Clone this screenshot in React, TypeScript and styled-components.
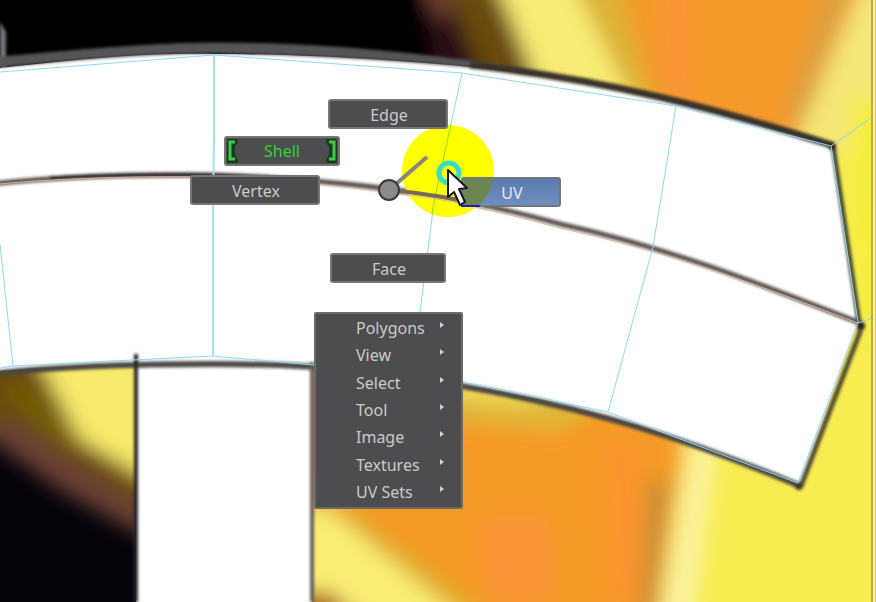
import React from 'react';
import styled, { createGlobalStyle, css } from 'styled-components';

const GlobalStyle = createGlobalStyle`
  *, *::before, *::after { box-sizing: border-box; }
  body { margin: 0; background: #fff; }
`;

const Stage = styled.main`
  position: relative;
  min-height: 100vh;
  overflow: hidden;
  font-family: 'Noto Sans', sans-serif;
  font-size: 16px;
  line-height: 20px;
`;

const Canvas = styled.svg`
  display: block;
  width: 100%;
  height: 100vh;
`;

const Overlay = styled.svg`
  position: absolute;
  left: 376px;
  top: 120px;
  pointer-events: none;
`;

const MarkingMenu = styled.nav`
  position: absolute;
  left: 0;
  top: 0;
`;

type Tone = 'plain' | 'checked' | 'hot';

const MarkingItem = styled.button<{ $x: number; $y: number; $w: number; $tone: Tone }>`
  position: absolute;
  left: ${(p) => p.$x}px;
  top: ${(p) => p.$y}px;
  width: ${(p) => p.$w}px;
  height: 30px;
  padding: 2px 0 0 2px;
  display: flex;
  align-items: center;
  justify-content: center;
  border: 2px solid #777677;
  border-radius: 3px;
  background: #4d4c4e;
  color: #cbcbcb;
  font: inherit;
  ${(p) =>
    p.$tone === 'checked' &&
    css`
      justify-content: space-between;
      padding: 0;
      color: #2fd62f;
    `}
  ${(p) =>
    p.$tone === 'hot' &&
    css`
      border-color: #727680;
      background: radial-gradient(circle 47px at -15px -8px, #6c8653 45px, transparent 47px),
        linear-gradient(#597bae, #6f8fbd);
      color: #e4e9f2;
    `}
`;

const Menu = styled.ul`
  position: absolute;
  left: 314px;
  top: 312px;
  width: 149px;
  min-height: 197px;
  margin: 0;
  padding: 0 0 1px;
  list-style: none;
  display: grid;
  grid-auto-rows: 1fr;
  border: 2px solid #6b6a6b;
  border-radius: 2px;
  background: #4d4c4e;
`;

const MenuRow = styled.li`
  display: flex;
`;

const MenuButton = styled.button`
  flex: 1;
  display: flex;
  align-items: center;
  justify-content: space-between;
  padding: 0 17px 0 40px;
  border: 0;
  background: none;
  color: #cbcbcb;
  font: inherit;
`;

const Arrow = styled.svg`
  margin-bottom: 6px;
`;

const Bracket = ({ right }: { right?: boolean }) => (
  <svg width="14" height="26" viewBox="0 0 14 26" fill="none" aria-hidden="true">
    <g transform={right ? 'translate(14 0) scale(-1 1)' : undefined}>
      <path
        d="M1 3Q1 1 3 1H11Q13 3 11 6Q9 7 9 10V16Q9 19 11 20Q13 23 11 25H3Q1 25 1 23Z"
        fill="#173c1b"
      />
      <path d="M9 4H4V21H9" stroke="#3fc94b" strokeWidth="3" />
    </g>
  </svg>
);

const marks: { label: string; x: number; y: number; w: number; tone: Tone }[] = [
  { label: 'Edge', x: 328, y: 99, w: 120, tone: 'plain' },
  { label: 'Shell', x: 224, y: 136, w: 116, tone: 'checked' },
  { label: 'Vertex', x: 190, y: 175, w: 130, tone: 'plain' },
  { label: 'UV', x: 461, y: 177, w: 100, tone: 'hot' },
  { label: 'Face', x: 330, y: 253, w: 116, tone: 'plain' },
];

const menuItems = ['Polygons', 'View', 'Select', 'Tool', 'Image', 'Textures', 'UV Sets'];

const TextureCanvas = () => (
  <Canvas viewBox="0 0 876 602" preserveAspectRatio="xMinYMin slice" role="img" aria-label="Texture with UV mesh">
    <defs>
      <filter id="soft" filterUnits="userSpaceOnUse" x="-60" y="-60" width="1000" height="730">
        <feGaussianBlur stdDeviation="10" />
      </filter>
      <filter id="line" filterUnits="userSpaceOnUse" x="-20" y="0" width="920" height="640">
        <feGaussianBlur stdDeviation="1.6" />
      </filter>
      <clipPath id="lower">
        <path d="M-20 364H312V620H-20Z" />
      </clipPath>
      <clipPath id="lowerRight">
        <path d="M312 340H900V640H312Z" />
      </clipPath>
    </defs>

    <rect width="876" height="602" fill="#f7ec50" />

    <g filter="url(#soft)">
      <path d="M-60-60H480L530 90H-60Z" fill="#030205" />
      <path d="M415-30H450L500 80H440Z" fill="#2a0b16" />
      <path d="M408-50L430-50L450 12L440 20Z" fill="#7c4a35" />
      <path d="M438-30H486L550 90H488Z" fill="#69480f" />
      <path d="M490-30H600L690 110H548Z" fill="#f8eb74" />
      <path d="M566-30H620L668 110H636Z" fill="#dcb235" />
      <path d="M612-40H870L796 160L654 108Z" fill="#f49a29" />
      <path d="M662-30H690V100H665Z" fill="#fb9437" />
      <path d="M836-40H860L805 120L785 120Z" fill="#d9a040" />
      <path d="M868-30L900-30V100L850 150H792Z" fill="#f5e678" />
      <path d="M850 100H900V330H862Z" fill="#f4ef3b" />
    </g>
    <path d="M0 0V68H6V32L0 22Z" fill="#77757a" filter="url(#line)" />

    <g clipPath="url(#lower)">
      <rect x="-20" y="350" width="340" height="270" fill="#04030a" />
      <g filter="url(#soft)">
        <path d="M-40 330H40L150 455V535L-30 425Z" fill="#6b4a0c" />
        <path d="M-30 425L20 425L150 515V540L60 490Z" fill="#6b4136" />
        <path d="M22 330H170V492L80 440Z" fill="#f8ea6c" />
        <path d="M0 385L20 385L80 440L60 445Z" fill="#776400" />
      </g>
    </g>

    <g clipPath="url(#lowerRight)">
      <g filter="url(#soft)">
        <path d="M290 350H684L682 460L654 640H290Z" fill="#f59a28" />
        <path d="M440 350L480 370L600 402L560 432L440 420Z" fill="#dfb738" />
        <path d="M450 370L550 398L520 404L450 396Z" fill="#f2df60" />
        <path d="M480 520H550V602H490Z" fill="#fc9538" />
        <path d="M604 440H640V602H610Z" fill="#fc942d" />
        <path d="M650 480H668L654 620H640Z" fill="#bd8b39" />
        <path d="M290 480L360 515L500 620H290Z" fill="#dfaa2a" />
        <path d="M290 505L330 510L470 625H290Z" fill="#faed74" />
        <path d="M285 592L330 592L365 625H285Z" fill="#a9580e" />
        <path d="M692 440H718L694 620H662Z" fill="#fbf3a0" />
      </g>
    </g>

    <path
      d="M0 68C100 57 150 53 214 54C320 54 420 62 480 68C610 83 720 112 832 146L858 322L800 486C690 439 590 405 462 385C390 370 300 363 214 363C140 363 60 365 0 371Z"
      fill="#fff"
    />
    <path d="M136 362H312V602H136Z" fill="#fff" />

    <g fill="none" filter="url(#line)">
      <path
        d="M-10 58C100 48 160 43 220 43C320 43 420 53 520 68L520 72C420 61 320 55 220 53C160 53 100 57-10 68Z"
        fill="#555458"
        stroke="#555458"
        strokeWidth="1"
      />
      <path d="M470 65C610 80 720 110 832 145" stroke="#37302a" strokeWidth="7" />
      <path d="M833 145L859 322" stroke="#4a4930" strokeWidth="5" />
      <path d="M860 320V332L801 486" stroke="#524d35" strokeWidth="5" />
      <path
        d="M800 486C690 440 590 408 462 386C390 371 300 364 214 364C140 364 60 366-10 374"
        stroke="#4a4644"
        strokeWidth="6"
      />
      <path d="M-10 184C60 176 140 174 214 175C390 182 480 202 560 224C670 248 760 284 860 323" stroke="#5a514e" strokeWidth="5" />
      <path d="M50 178C120 174 170 174 270 177" stroke="#080405" strokeWidth="3" />
      <path d="M136 354V602" stroke="#28242a" strokeWidth="4" />
      <path d="M312 362V602" stroke="#605c5a" strokeWidth="4" />
      <circle cx="832" cy="146" r="4" fill="#292421" />
      <circle cx="861" cy="326" r="4" fill="#292421" />
      <circle cx="799" cy="486" r="4" fill="#45372c" />
    </g>

    <path
      d="M0 184C60 178 140 176 214 177C390 186 480 206 560 228C670 252 760 286 858 323"
      fill="none"
      stroke="#d8b59f"
      strokeWidth="1"
    />
    <path d="M315 370V508" stroke="#85623a" strokeWidth="2" />

    <g fill="none" stroke="#8fd7f5" strokeWidth="1">
      <path d="M0 72L214 55L462 73L676 106L831 146L858 322L798 483L608 412L462 382L315 365L212 356L13 366L0 368" />
      <path d="M214 55V140L213 200V356" stroke="#a9def5" strokeWidth="2" />
      <path d="M462 73L434 202L420 312" />
      <path d="M676 106L653 247L608 412" />
      <path d="M0 244L13 366" />
      <path d="M831 146L874 116M858 323L876 317" />
    </g>
    <path d="M872 0V602" stroke="#c2a94c" strokeWidth="2" />
    <path d="M874 0V602" stroke="#faf0a0" strokeWidth="2" />
    <path d="M876 0V602" stroke="#c5ad48" strokeWidth="1" />
  </Canvas>
);

export default function App() {
  return (
    <Stage>
      <GlobalStyle />
      <TextureCanvas />
      <Overlay width="120" height="100" viewBox="376 120 120 100" fill="none" aria-hidden="true">
        <circle cx="448" cy="171" r="46" fill="#ffff00" />
        <path d="M451 124L434 202L432 214" stroke="#8fe000" strokeWidth="1" />
        <path d="M390 190Q440 195 488 206" stroke="#766b58" strokeWidth="4" />
        <path d="M404 194Q440 199 484 208" stroke="#d8b59f" strokeWidth="1" />
        <path d="M389 190L427 157" stroke="#8f8478" strokeWidth="4" />
        <circle cx="389" cy="190" r="10" fill="#8b8a8b" stroke="#3a393a" strokeWidth="2" />
      </Overlay>
      <MarkingMenu aria-label="UV component selection">
        {marks.map((m) => (
          <MarkingItem key={m.label} type="button" $x={m.x} $y={m.y} $w={m.w} $tone={m.tone}>
            {m.tone === 'checked' && <Bracket />}
            <span>{m.label}</span>
            {m.tone === 'checked' && <Bracket right />}
          </MarkingItem>
        ))}
      </MarkingMenu>
      <Menu>
        {menuItems.map((label) => (
          <MenuRow key={label}>
            <MenuButton type="button">
              <span>{label}</span>
              <Arrow width="4" height="6" viewBox="0 0 4 6" aria-hidden="true">
                <path d="M0 0L4 3L0 6Z" fill="#d0d0d0" />
              </Arrow>
            </MenuButton>
          </MenuRow>
        ))}
      </Menu>
      <Overlay width="120" height="100" viewBox="376 120 120 100" fill="none" aria-hidden="true">
        <circle cx="449" cy="173" r="10" stroke="#31e0c4" strokeWidth="5" />
        <path d="M461 206H480" stroke="#2414d8" strokeWidth="2" />
        <path
          d="M448 170V197L454 192L460 205L465 202L459 189L467 188Z"
          fill="#fff"
          stroke="#17161c"
          strokeWidth="2"
          strokeLinejoin="round"
        />
      </Overlay>
    </Stage>
  );
}
